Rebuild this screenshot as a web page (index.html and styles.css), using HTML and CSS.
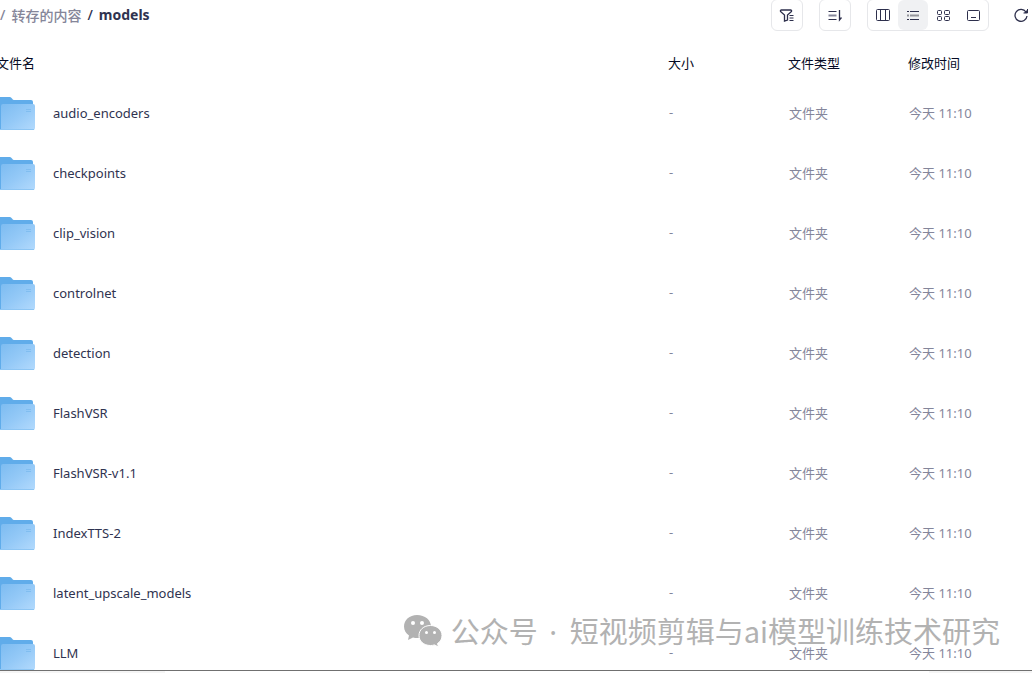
FILE: index.html
```html
<!DOCTYPE html>
<html lang="zh-CN">
<head>
    <meta charset="UTF-8">
    <meta name="viewport" content="width=device-width, initial-scale=1.0">
    <title>models</title>
    <link rel="stylesheet" href="styles.css">
</head>
<body>

    <!-- Shared folder icon -->
    <svg class="sprite" aria-hidden="true">
        <defs>
            <linearGradient id="folderFront" x1="0" y1="0" x2="1" y2="1">
                <stop offset="0" stop-color="#7dbcf1"/>
                <stop offset="0.5" stop-color="#94c9f7"/>
                <stop offset="1" stop-color="#b3dafd"/>
            </linearGradient>
        </defs>
        <symbol id="folder" viewBox="0 0 35 33">
            <path d="M0 0h10q1 0 2 1.500t2 1.500h17q2 0 2 2v27H0z" fill="#60acea"/>
            <path d="M1 9q0-2 2-2h30q2 0 2 2v22q0 2-2 2H1z" fill="url(#folderFront)"/>
            <path d="M0 32.500h34" stroke="#8cc5f4"/>
            <path d="M26 12.500h5M26 14.500h5" stroke="#80bdf0"/>
        </symbol>
    </svg>

    <main class="page">
        <header class="toolbar">
            <nav class="breadcrumb">
                <span>/</span>
                <a href="#">转存的内容</a>
                <span class="current">/</span>
                <strong class="current">models</strong>
            </nav>

            <div class="actions">
                <button class="tool-button" aria-label="筛选">
                    <svg width="16" height="16" viewBox="0 0 16 16"><path d="M1.500 3h11M1.500 3v1.500L5.500 8v6l3-1V8l4-3.500V3" stroke-width="1.300"/><path d="M10.500 8.500h4M10.500 11h4M10.500 13.500h4"/></svg>
                </button>
                <button class="tool-button" aria-label="排序">
                    <svg width="16" height="16" viewBox="0 0 16 16"><path d="M1.500 4.500h8M1.500 12.500h8"/><path d="M1.500 8.500h8" stroke="#85869a" stroke-width="2"/><path d="M12.500 3v10l2-2.500" stroke-width="1.300"/></svg>
                </button>
                <div class="view-switch">
                    <button aria-label="分栏视图">
                        <svg width="16" height="16" viewBox="0 0 16 16"><rect x="1.500" y="2.500" width="13" height="11" rx="1"/><path d="M5.500 2.500v11M10.500 2.500v11"/></svg>
                    </button>
                    <button class="active" aria-label="列表视图">
                        <svg width="16" height="16" viewBox="0 0 16 16"><path d="M2 4.500h2M5 4.500h9M2 12.500h2M5 12.500h9"/><path d="M2 8.500h2M5 8.500h9" stroke="#929399" stroke-width="2"/></svg>
                    </button>
                    <button aria-label="网格视图">
                        <svg width="16" height="16" viewBox="0 0 16 16"><rect x="2.500" y="3.500" width="4" height="4" rx="1"/><rect x="9.500" y="3.500" width="5" height="4" rx="1"/><rect x="2.500" y="9.500" width="4" height="4" rx="1"/><rect x="9.500" y="9.500" width="5" height="4" rx="1"/></svg>
                    </button>
                    <button aria-label="大图视图">
                        <svg width="16" height="16" viewBox="0 0 16 16"><rect x="2.500" y="3.500" width="12" height="10" rx="1"/><path d="M6 10.500h5"/></svg>
                    </button>
                </div>
                <button class="refresh" aria-label="刷新">
                    <svg width="16" height="16" viewBox="0 0 16 16"><path d="M13 5a6 6 0 1 0 1 4" stroke-width="1.300"/><path d="M14.500 2.500v3.500H11z" fill="#2d2f4c" stroke="none"/><path d="M14.500 2v4H10.500"/></svg>
                </button>
            </div>
        </header>

        <div class="file-area">
            <table class="file-table">
                <thead>
                    <tr>
                        <th class="col-name">文件名</th>
                        <th class="col-size">大小</th>
                        <th class="col-type">文件类型</th>
                        <th class="col-time">修改时间</th>
                    </tr>
                </thead>
                <tbody>
                    <tr>
                        <td><a class="file" href="#"><svg class="folder"><use href="#folder"/></svg>audio_encoders</a></td>
                        <td>-</td>
                        <td>文件夹</td>
                        <td>今天 11:10</td>
                    </tr>
                    <tr>
                        <td><a class="file" href="#"><svg class="folder"><use href="#folder"/></svg>checkpoints</a></td>
                        <td>-</td>
                        <td>文件夹</td>
                        <td>今天 11:10</td>
                    </tr>
                    <tr>
                        <td><a class="file" href="#"><svg class="folder"><use href="#folder"/></svg>clip_vision</a></td>
                        <td>-</td>
                        <td>文件夹</td>
                        <td>今天 11:10</td>
                    </tr>
                    <tr>
                        <td><a class="file" href="#"><svg class="folder"><use href="#folder"/></svg>controlnet</a></td>
                        <td>-</td>
                        <td>文件夹</td>
                        <td>今天 11:10</td>
                    </tr>
                    <tr>
                        <td><a class="file" href="#"><svg class="folder"><use href="#folder"/></svg>detection</a></td>
                        <td>-</td>
                        <td>文件夹</td>
                        <td>今天 11:10</td>
                    </tr>
                    <tr>
                        <td><a class="file" href="#"><svg class="folder"><use href="#folder"/></svg>FlashVSR</a></td>
                        <td>-</td>
                        <td>文件夹</td>
                        <td>今天 11:10</td>
                    </tr>
                    <tr>
                        <td><a class="file" href="#"><svg class="folder"><use href="#folder"/></svg>FlashVSR-v1.1</a></td>
                        <td>-</td>
                        <td>文件夹</td>
                        <td>今天 11:10</td>
                    </tr>
                    <tr>
                        <td><a class="file" href="#"><svg class="folder"><use href="#folder"/></svg>IndexTTS-2</a></td>
                        <td>-</td>
                        <td>文件夹</td>
                        <td>今天 11:10</td>
                    </tr>
                    <tr>
                        <td><a class="file" href="#"><svg class="folder"><use href="#folder"/></svg>latent_upscale_models</a></td>
                        <td>-</td>
                        <td>文件夹</td>
                        <td>今天 11:10</td>
                    </tr>
                    <tr>
                        <td><a class="file" href="#"><svg class="folder"><use href="#folder"/></svg>LLM</a></td>
                        <td>-</td>
                        <td>文件夹</td>
                        <td>今天 11:10</td>
                    </tr>
                </tbody>
            </table>
        </div>

        <footer class="bottom-edge"><span class="edge-left"></span><span class="edge-right"></span></footer>

        <div class="watermark">
            <svg width="40" height="34" viewBox="0 0 40 34">
                <path d="M14 1C6.500 1 1 6 1 12.500c0 4 2 7 5 9L5 26l5-2.500q2 .5 4.500 .5C22 24 28 19 28 12.500S22 1 14 1z" fill="#b2b2b2"/>
                <path d="M27.500 11.500C20.500 11.500 16 16 16 21.500S20.500 31.500 27.500 31.500q2 0 4-.6l4 2.100-1-3.500c3-2 4.500-4.500 4.500-8 0-5.500-5-10-11.500-10z" fill="#b2b2b2" stroke="#fff"/>
                <g fill="#fff"><circle cx="10" cy="9" r="2"/><circle cx="19" cy="9" r="2"/><circle cx="23.500" cy="18.500" r="1.500"/><circle cx="31.500" cy="18.500" r="1.500"/></g>
            </svg>
            <span>公众号<span class="dot"> · </span>短视频剪辑与ai模型训练技术研究</span>
        </div>
    </main>

</body>
</html>
```

FILE: styles.css
```css
* {
    box-sizing: border-box;
}

body {
    margin: 0;
    font-family: "Noto Sans", "Noto Sans CJK SC", sans-serif;
    font-size: 13px;
    color: #2f3350;
    background-color: #fff;
}

a {
    color: inherit;
    text-decoration: none;
}

button {
    display: flex;
    align-items: center;
    justify-content: center;
    padding: 0;
    border: none;
    background: none;
    cursor: pointer;
}

button svg {
    fill: none;
    stroke: #2d2f4c;
}

.sprite {
    position: absolute;
    width: 0;
    height: 0;
}

.page {
    position: relative;
    display: flex;
    flex-direction: column;
    height: 100vh;
    overflow: hidden;
}

/* Top bar */
.toolbar {
    display: flex;
    flex: none;
    align-items: center;
    justify-content: space-between;
    height: 32px;
    margin-top: -1px;
    margin-bottom: 12px;
}

.breadcrumb {
    display: flex;
    gap: 6px;
    padding-bottom: 1px;
    font-size: 14px;
    font-weight: 500;
    color: #858699;
}

.breadcrumb .current {
    color: #2f3350;
}

.actions {
    display: flex;
    align-items: center;
    gap: 16px;
    padding-right: 3px;
}

.tool-button {
    width: 32px;
    height: 32px;
    border: 1px solid #e6e7ea;
    border-radius: 6px;
}

.view-switch {
    display: flex;
    height: 32px;
    border: 1px solid #e6e7ea;
    border-radius: 6px;
}

.view-switch button {
    width: 30px;
    height: 30px;
    border-radius: 6px;
}

.view-switch .active {
    background-color: #f0f1f3;
}

.refresh {
    margin-left: 8px;
}

/* File list */
.file-area {
    flex: 1;
    min-height: 0;
    overflow: hidden;
}

.file-table {
    width: 100%;
    table-layout: fixed;
    border-collapse: collapse;
}

th, td {
    padding: 0 0 2px;
    text-align: left;
    white-space: nowrap;
}

th {
    height: 40px;
    font-weight: 400;
    color: #050a24;
}

td {
    height: 60px;
    padding-left: 1px;
    color: #84869b;
}

td:first-child {
    padding: 0;
}

.col-name {
    text-indent: -4px;
}

.col-size, .col-type {
    width: 120px;
}

.col-time {
    width: 124px;
}

.file {
    display: flex;
    align-items: center;
    gap: 18px;
    color: #2f3350;
}

.folder {
    width: 35px;
    height: 33px;
}

/* Bottom edge of the window */
.bottom-edge {
    display: flex;
    flex: none;
    justify-content: space-between;
    height: 3px;
    border-top: 1px solid #707070;
}

.edge-left {
    width: 16%;
    background-color: #f5f5f5;
}

.edge-right {
    width: 10%;
    background-color: #f5f5f5;
}

.watermark {
    position: absolute;
    right: 32px;
    bottom: 21px;
    display: flex;
    align-items: center;
    gap: 8px;
    font-family: "Noto Sans CJK SC", sans-serif;
    font-size: 29px;
    line-height: 40px;
    color: #b2b2b2;
    white-space: nowrap;
    pointer-events: none;
}

.watermark .dot {
    padding: 0 5px 0 4px;
    font-family: "Noto Sans", sans-serif;
}
```
